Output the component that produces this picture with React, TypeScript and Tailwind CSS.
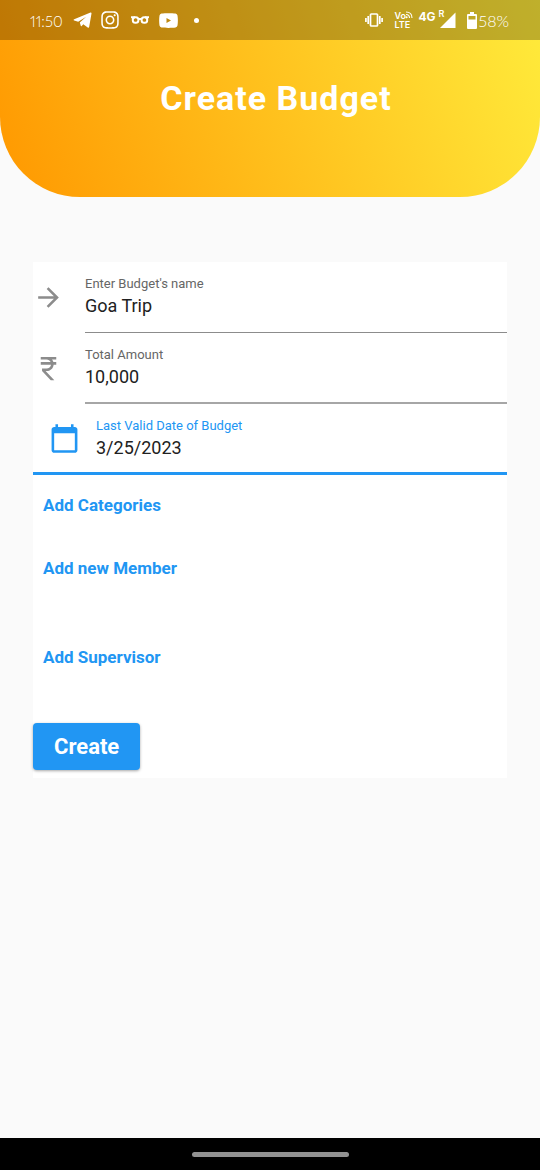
import { useState } from "react";
import type { ReactNode } from "react";
import { FaInstagram } from "react-icons/fa";
import { MdArrowForward, MdCalendarToday, MdCurrencyRupee } from "react-icons/md";

function StatusBar() {
  return (
    <div className="flex h-10 items-center justify-between bg-black/25 pl-[30px] pr-[31px] font-['Lato',sans-serif] text-base font-light text-white">
      <div className="flex items-center">
        <span className="w-[43px] pt-0.5 text-[15px] proportional-nums">11:50</span>
        <svg width="19" height="17" viewBox="0 0 19 17" fill="currentColor">
          <path d="M17.500.6c.7-.2 1.100.2 1 .9l-2.300 13.300c-.2.900-.8 1.100-1.500.6l-4.400-3.200-1.600 1.700c-.4.400-.9.300-1-.3l-.9-3.100 6.400-5.700-8 5-4-1.300c-.8-.3-.8-.9 0-1.300z" />
        </svg>
        <FaInstagram size={20} className="ml-2" />
        <svg width="18" height="8" viewBox="0 0 18 8" className="ml-[11px]" fill="none" stroke="currentColor" strokeWidth="2">
          <rect x="1.800" y="1.200" width="5.600" height="5.600" rx="2.600" />
          <rect x="10.600" y="1.200" width="5.600" height="5.600" rx="2.600" />
          <path d="M0 1.200h4M14 1.200h4M7 3h4" />
        </svg>
        <svg width="19" height="15" viewBox="0 0 19 15" className="ml-[10px]" fill="currentColor">
          <path fillRule="evenodd" d="M2.500.5C6 0 13 0 16.500.5a2.500 2.500 0 0 1 2 2c.5 3 .5 7 0 10a2.500 2.500 0 0 1-2 2c-3.500.5-10.500.5-14 0a2.500 2.500 0 0 1-2-2c-.5-3-.5-7 0-10a2.500 2.500 0 0 1 2-2zM7.500 5v5l4.500-2.500z" />
        </svg>
        <span className="ml-4 size-[5px] rounded-full bg-white" />
      </div>
      <div className="flex items-center">
        <svg width="18" height="14" viewBox="0 0 18 14" fill="none" stroke="currentColor" strokeWidth="1.700">
          <rect x="5.500" y="1" width="7" height="12" rx=".8" />
          <path d="M3.200 3v8M.900 5v4M14.800 3v8M17.100 5v4" />
        </svg>
        <span className="relative ml-[11px] flex w-[19px] flex-col font-['Inter',sans-serif] text-[9px] leading-[9px] font-semibold">
          <span>Vo</span>
          <span>LTE</span>
          <svg width="8" height="8" viewBox="0 0 8 8" className="absolute right-0 top-0" fill="none" stroke="currentColor" strokeWidth="1.1">
            <path d="M1 1c4 0 6 2.500 6 6M1 3.500c2.200 0 3.500 1.300 3.500 3.500" />
            <circle cx="1.600" cy="6.300" r=".5" fill="currentColor" />
          </svg>
        </span>
        <span className="ml-[5px] mb-[7px] font-['Inter',sans-serif] text-[12px] leading-4 font-bold">4G</span>
        <span className="relative ml-[3px]">
          <svg width="17" height="18" viewBox="0 0 17 18" fill="currentColor">
            <path d="M16.500 1.500v15.500H1z" />
          </svg>
          <span className="absolute left-0 top-[-2px] font-['Inter',sans-serif] text-[9px] leading-[9px] font-semibold">R</span>
        </span>
        <svg width="10" height="17" viewBox="0 0 10 17" className="ml-[11px]" fill="currentColor">
          <path fillRule="evenodd" d="M3 0h4v2h2a1 1 0 0 1 1 1v13a1 1 0 0 1-1 1H1a1 1 0 0 1-1-1V3a1 1 0 0 1 1-1h2zM1.500 4v3.500h7V4z" />
        </svg>
        <span className="ml-[2px] pt-0.5 proportional-nums">58%</span>
      </div>
    </div>
  );
}

type FieldProps = {
  id: string;
  label: string;
  icon: ReactNode;
  value: string;
  onChange: (value: string) => void;
  rowClass: string;
  bodyClass: string;
  labelClass: string;
};

function Field({ id, label, icon, value, onChange, rowClass, bodyClass, labelClass }: FieldProps) {
  return (
    <div className={`flex h-[71px] items-center ${rowClass}`}>
      {icon}
      <div className={`flex h-full min-w-0 flex-1 flex-col pt-[14px] ${bodyClass}`}>
        <label htmlFor={id} className={`text-[13px] leading-4 ${labelClass}`}>
          {label}
        </label>
        <input
          id={id}
          value={value}
          onChange={(event) => onChange(event.target.value)}
          className="mt-1 w-full bg-transparent text-[18px] leading-5 text-[#212121] outline-none"
        />
      </div>
    </div>
  );
}

export default function App() {
  const [name, setName] = useState("Goa Trip");
  const [amount, setAmount] = useState("10,000");
  const [date, setDate] = useState("3/25/2023");
  const link = "block px-[10px] text-left text-[17px] leading-6 font-bold text-[#2196f3]";

  return (
    <div className="flex min-h-screen flex-col bg-[#fafafa] font-['Roboto',sans-serif]">
      <header className="overflow-hidden rounded-b-[80px] bg-[linear-gradient(70deg,#ff9800,#ffeb3b)]">
        <StatusBar />
        <h1 className="pt-[37px] pb-[78px] pl-3 text-center text-[34px] leading-[42px] font-bold tracking-[1px] text-white">
          Create Budget
        </h1>
      </header>

      <main className="flex-1 px-[33px] pt-[65px]">
        <form className="bg-white pb-2" onSubmit={(event) => event.preventDefault()}>
          <Field
            id="name"
            label="Enter Budget's name"
            icon={<MdArrowForward size={31} className="text-[#8c8c8c]" />}
            value={name}
            onChange={setName}
            rowClass=""
            bodyClass="ml-[21px] border-b border-[#8c8c8c]"
            labelClass="text-[#666666]"
          />
          <Field
            id="amount"
            label="Total Amount"
            icon={<MdCurrencyRupee size={31} className="text-[#8c8c8c]" />}
            value={amount}
            onChange={setAmount}
            rowClass=""
            bodyClass="ml-[21px] border-b-2 border-[#a6a6a6]"
            labelClass="text-[#666666]"
          />
          <Field
            id="date"
            label="Last Valid Date of Budget"
            icon={<MdCalendarToday size={31} className="text-[#2196f3]" />}
            value={date}
            onChange={setDate}
            rowClass="border-b-3 border-[#2196f3] pl-4"
            bodyClass="ml-4"
            labelClass="text-[#2196f3]"
          />
          <div className="flex flex-col items-start pt-[18px]">
            <button type="button" className={link}>Add Categories</button>
            <button type="button" className={`mt-[39px] ${link}`}>Add new Member</button>
            <button type="button" className={`mt-[65px] ${link}`}>Add Supervisor</button>
            <button
              type="submit"
              className="mt-[54px] h-[47px] rounded px-[21px] text-[22px] font-bold text-white bg-[#2196f3] shadow-[0_1px_3px_rgba(0,0,0,0.35)]"
            >
              Create
            </button>
          </div>
        </form>
      </main>

      <footer className="flex h-8 items-center justify-center bg-black">
        <div className="h-[5px] w-[157px] rounded-full bg-[#919191]" />
      </footer>
    </div>
  );
}
